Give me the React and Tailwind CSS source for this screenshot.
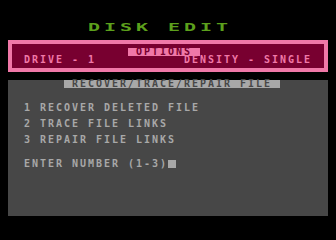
export default function App() {
  const cell = "h-2 leading-[8px] text-[10px] font-bold tracking-[1.98px] whitespace-pre";
  return (
    <div className="w-[336px] h-[240px] bg-black overflow-hidden px-2 pt-6 font-['DejaVu_Sans_Mono',monospace]">
      {/* title, double width */}
      <div className={`${cell} pl-[80px] text-[#5ca01c]`}>
        <span className="inline-block origin-left scale-x-200">DISK EDIT</span>
      </div>

      <div className="mt-2 h-8 border-4 border-[#f078a8] bg-[#780030] pt-1">
        <div className={`${cell} ml-[116px] w-[72px] bg-[#f078a8] text-[#780030]`}> OPTIONS </div>
        <div className={`${cell} flex justify-between px-3 text-[#f078a8]`}>
          <span>DRIVE - 1</span>
          <span>DENSITY - SINGLE</span>
        </div>
      </div>

      <div className="mt-2 h-[136px] bg-[#474747] text-[#a8a8a8]">
        <div className={`${cell} ml-[56px] w-[216px] bg-[#a8a8a8] text-[#474747]`}> RECOVER/TRACE/REPAIR FILE </div>
        <div className="flex flex-col gap-2 pl-4 pt-4">
          <div className={cell}>1 RECOVER DELETED FILE</div>
          <div className={cell}>2 TRACE FILE LINKS</div>
          <div className={cell}>3 REPAIR FILE LINKS</div>
          <div className={`${cell} mt-2 flex`}>
            <span>ENTER NUMBER (1-3)</span>
            <span className="w-2 h-2 bg-[#a8a8a8]" />
          </div>
        </div>
      </div>
    </div>
  );
}
